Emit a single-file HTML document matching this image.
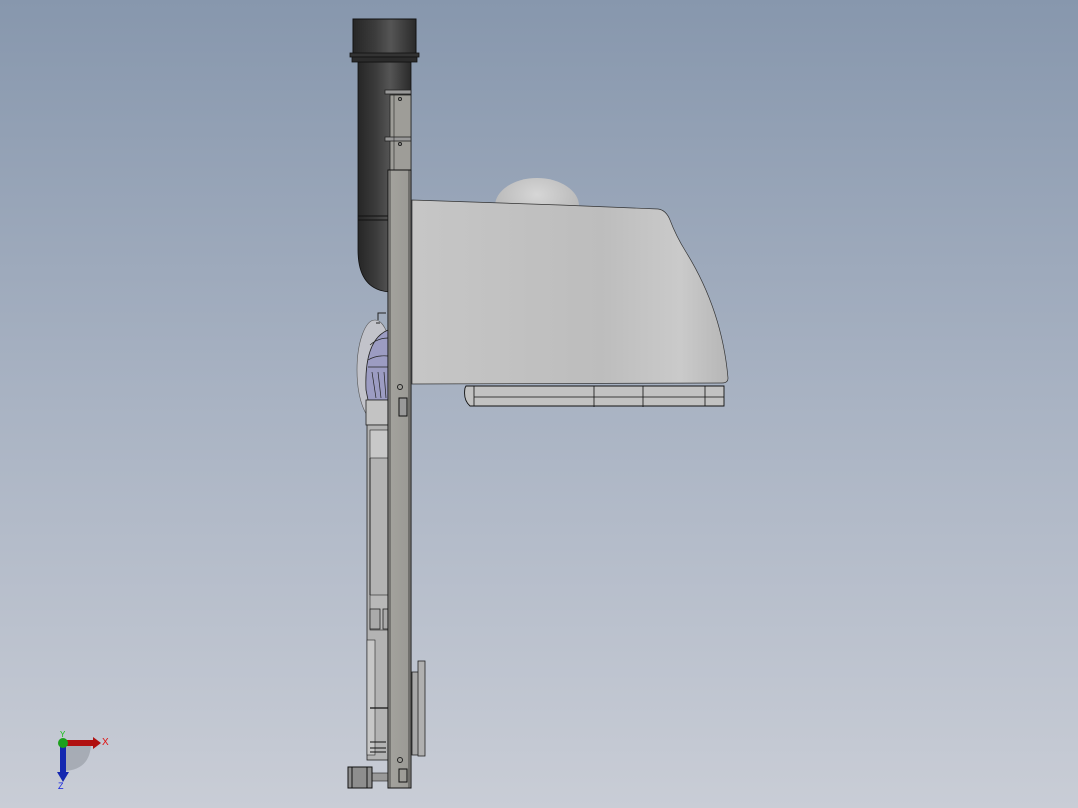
<!DOCTYPE html>
<html><head><style>html,body{margin:0;padding:0}body{width:1078px;height:808px;overflow:hidden;background:linear-gradient(#8797ad,#a9b3c3 50%,#c9cdd6)}svg{display:block}</style></head>
<body>
<svg width="1078" height="808" viewBox="0 0 1078 808" xmlns="http://www.w3.org/2000/svg">
<defs>
<linearGradient id="pipe" x1="0" x2="1"><stop offset="0" stop-color="#262626"/><stop offset=".35" stop-color="#3c3c3c"/><stop offset=".6" stop-color="#555"/><stop offset="1" stop-color="#2a2a2a"/></linearGradient>
<linearGradient id="body" x1="0" x2="1"><stop offset="0" stop-color="#c6c6c6"/><stop offset=".6" stop-color="#bdbdbd"/><stop offset=".85" stop-color="#cacaca"/><stop offset="1" stop-color="#b6b6b6"/></linearGradient>
<linearGradient id="bar" x1="0" x2="1"><stop offset="0" stop-color="#a4a39e"/><stop offset="1" stop-color="#9a9994"/></linearGradient>
<radialGradient id="dome" cx=".5" cy=".3" r=".7"><stop offset="0" stop-color="#d6d6d6"/><stop offset="1" stop-color="#b0b0b0"/></radialGradient>
</defs>
<path d="M358 62 H411 V283 Q405 292 390 292 Q358 290 358 250 Z" fill="url(#pipe)" stroke="#111" stroke-width=".8"/>
<line x1="358" y1="216" x2="388" y2="216" stroke="#111"/>
<line x1="358" y1="220" x2="388" y2="220" stroke="#111"/>
<rect x="353" y="19" width="63" height="35" fill="url(#pipe)" stroke="#111"/>
<rect x="350" y="53" width="69" height="4" fill="#333" stroke="#111" stroke-width=".8"/>
<rect x="352" y="57" width="65" height="5" fill="#2b2b2b" stroke="#111" stroke-width=".8"/>
<ellipse cx="375" cy="370" rx="18" ry="50" fill="#c2c3ca" stroke="#555" stroke-width=".6"/>
<path d="M366 390 Q364 340 388 330 V400 H368 Z" fill="#9c9cc2" stroke="#222" stroke-width=".8"/>
<path d="M370 345 Q378 338 388 338 M368 360 Q376 355 388 356 M368 367 H388 M372 372 L376 398 M378 372 L381 398 M384 372 L386 398" stroke="#222" fill="none" stroke-width=".7"/>
<rect x="366" y="400" width="22" height="25" fill="#c3c3c3" stroke="#222" stroke-width=".8"/>
<path d="M378 320 V313 H386 M376 323 H380" stroke="#222" fill="none"/>
<rect x="367" y="425" width="21" height="335" fill="#b3b3b3" stroke="#222" stroke-width=".8"/>
<rect x="370" y="430" width="18" height="28" fill="#c8c8c8" stroke="#222" stroke-width=".6"/>
<line x1="370" y1="458" x2="370" y2="595" stroke="#222"/>
<rect x="370" y="595" width="18" height="35" fill="#b8b8b8" stroke="#222" stroke-width=".6"/>
<rect x="370" y="609" width="10" height="20" fill="#aaa" stroke="#222" stroke-width=".8"/>
<rect x="383" y="609" width="5" height="20" fill="#aaa" stroke="#222" stroke-width=".8"/>
<rect x="367" y="640" width="8" height="115" fill="#c7c7c7" stroke="#222" stroke-width=".6"/>
<line x1="370" y1="708" x2="388" y2="708" stroke="#111" stroke-width="1.2"/>
<path d="M370 742 H386 M370 748 H386 M370 752 H386" stroke="#111"/>
<rect x="372" y="773" width="18" height="8" fill="#999" stroke="#222" stroke-width=".6"/>
<rect x="348" y="767" width="24" height="21" fill="#8e8e8e" stroke="#111"/>
<line x1="352" y1="767" x2="352" y2="788" stroke="#111"/><line x1="367" y1="767" x2="367" y2="788" stroke="#111"/>
<rect x="412" y="672" width="8" height="83" fill="#a8a8a8" stroke="#222" stroke-width=".8"/>
<rect x="418" y="661" width="7" height="95" fill="#b0b0b0" stroke="#222" stroke-width=".8"/>
<rect x="390" y="95" width="21" height="75" fill="#9e9d98" stroke="#222" stroke-width=".8"/>
<rect x="385" y="90" width="26" height="4" fill="#999" stroke="#222" stroke-width=".8"/>
<rect x="385" y="137" width="26" height="4" fill="#999" stroke="#222" stroke-width=".8"/>
<circle cx="400" cy="99" r="1.5" fill="none" stroke="#222"/><circle cx="400" cy="144" r="1.5" fill="none" stroke="#222"/>
<line x1="394" y1="95" x2="394" y2="170" stroke="#222" stroke-width=".6"/>
<rect x="388" y="170" width="23" height="618" fill="url(#bar)" stroke="#111" stroke-width="1"/>
<line x1="390" y1="170" x2="390" y2="788" stroke="#222" stroke-width=".7"/>
<line x1="409" y1="170" x2="409" y2="788" stroke="#222" stroke-width=".7"/>
<circle cx="400" cy="387" r="2.5" fill="none" stroke="#222"/>
<rect x="399" y="398" width="8" height="18" fill="#999" stroke="#111"/>
<circle cx="400" cy="760" r="2.5" fill="none" stroke="#222"/>
<rect x="399" y="769" width="8" height="13" fill="none" stroke="#111"/>
<ellipse cx="537" cy="206" rx="42" ry="28" fill="url(#dome)"/>
<path d="M412 200 L560 205 L658 209 Q666 210 670 220 Q676 236 686 252 Q722 310 728 378 Q728 383 722 383 L412 384 Z" fill="url(#body)" stroke="#333" stroke-width=".7"/>
<path d="M466 386 H724 V406 H470 Q463 400 465 388 Z" fill="#c2c2c2" stroke="#111" stroke-width=".9"/>
<path d="M474 397 H724 M594 386 V407 M643 386 V407 M705 386 V406 M474 386 V406" stroke="#111" stroke-width=".8" fill="none"/>
<path d="M64 744 L91 744 Q90 770 64 771 Z" fill="#9aa0a8" opacity=".7"/>
<rect x="64" y="740" width="30" height="6" fill="#b01010"/>
<path d="M93 737 L101 743 L93 749 Z" fill="#b01010"/>
<rect x="60" y="745" width="6" height="28" fill="#1428b0"/>
<path d="M57 772 L63 782 L69 772 Z" fill="#1428b0"/>
<circle cx="63" cy="743" r="5" fill="#1ca01c"/>
<text x="102" y="745" font-family="Liberation Sans, sans-serif" font-size="10" fill="#e01010">X</text>
<text x="58" y="789" font-family="Liberation Sans, sans-serif" font-size="9" fill="#1020e0">Z</text>
<text x="60" y="737" font-family="Liberation Sans, sans-serif" font-size="8" fill="#10c010">Y</text>
</svg>
</body></html>
